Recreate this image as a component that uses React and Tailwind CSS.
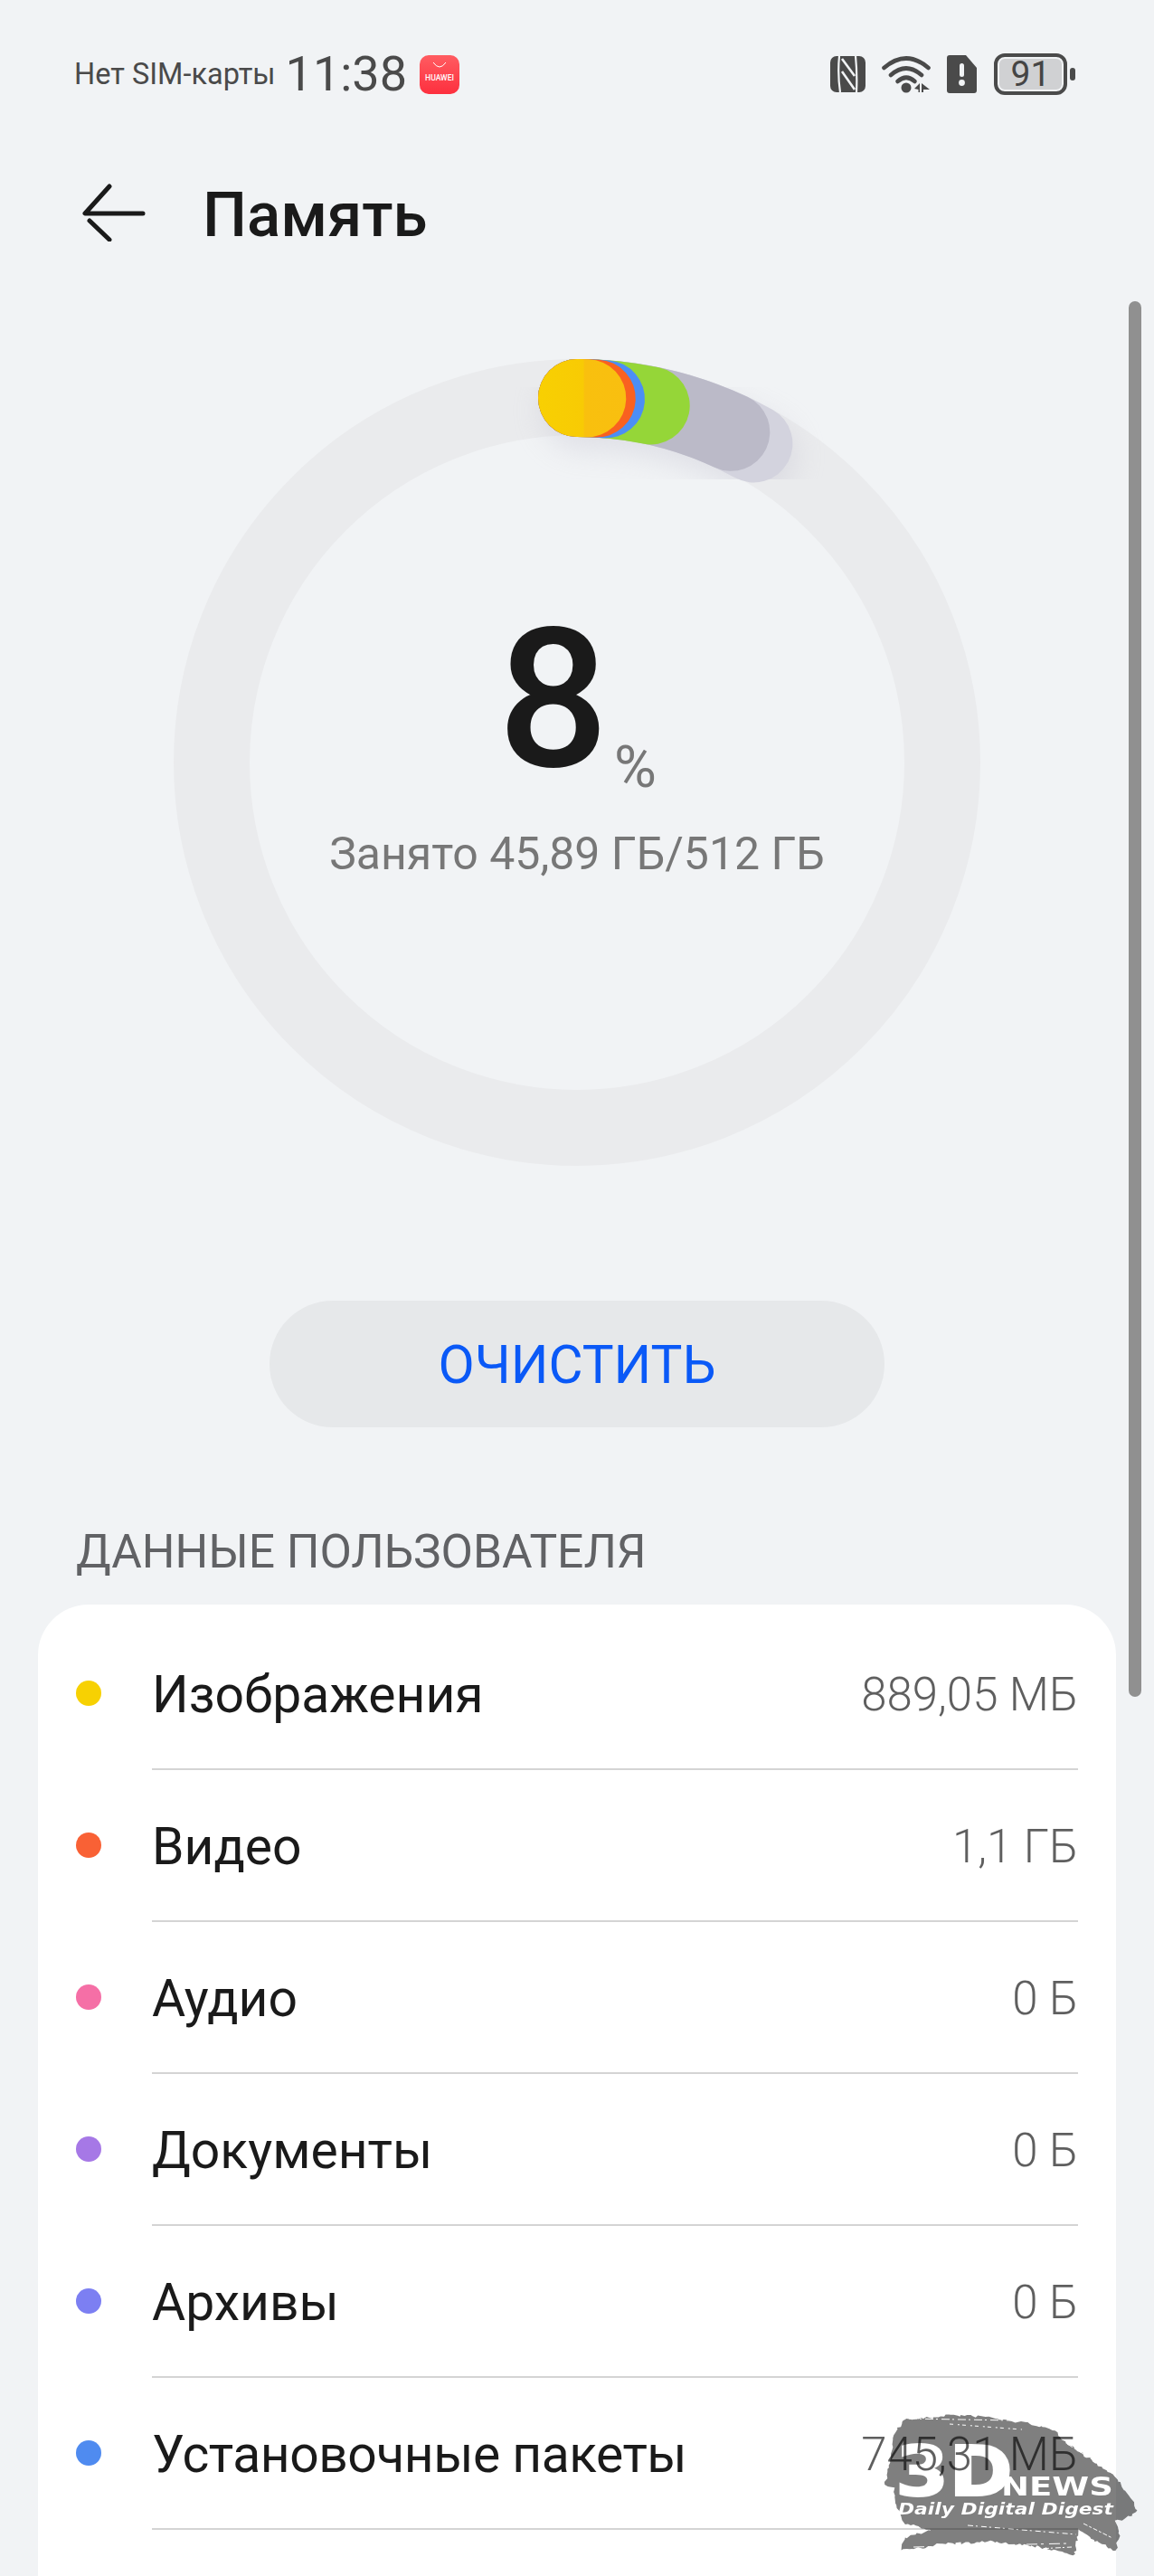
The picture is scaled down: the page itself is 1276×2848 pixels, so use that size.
import React from "react";

const ROWS = [
  { label: "Изображения", value: "889,05 МБ", dot: "bg-[#f7d102]" },
  { label: "Видео", value: "1,1 ГБ", dot: "bg-[#f96135]" },
  { label: "Аудио", value: "0 Б", dot: "bg-[#f56fa6]" },
  { label: "Документы", value: "0 Б", dot: "bg-[#a678e6]" },
  { label: "Архивы", value: "0 Б", dot: "bg-[#7c7ff2]" },
  { label: "Установочные пакеты", value: "745,31 МБ", dot: "bg-[#4f8bf0]", labelClass: "tracking-[-0.5px]" },
];

const BRUSH = [
  [120, 55], [150, 53], [166, 50], [210, 52], [232, 56], [262, 60], [286, 68], [300, 80],
  [332, 104], [353, 118], [362, 132], [370, 142], [378, 156], [366, 163], [354, 168], [358, 178],
  [354, 201], [336, 192], [312, 176], [308, 205], [270, 196], [214, 190], [160, 193], [117, 200],
  [120, 186], [150, 177], [120, 170], [110, 147], [108, 130], [98, 128], [106, 97], [107, 72], [115, 62],
];

// rough torn edge for the brush stroke
const brushPath = () => {
  const pts = [];
  let seed = 7;
  const rnd = () => {
    seed = (seed * 16807) % 2147483647;
    return seed / 2147483647 - 0.5;
  };
  BRUSH.forEach(([x, y], i) => {
    const [nx, ny] = BRUSH[(i + 1) % BRUSH.length];
    const steps = Math.max(1, Math.round(Math.hypot(nx - x, ny - y) / 3));
    for (let s = 0; s < steps; s++) {
      const t = s / steps;
      pts.push(`${(x + (nx - x) * t + rnd() * 3).toFixed(1)} ${(y + (ny - y) * t + rnd() * 3).toFixed(1)}`);
    }
  });
  return `M${pts.join(" L")} Z`;
};

const polar = (deg) => {
  const a = (deg * Math.PI) / 180;
  return [446 + 403 * Math.sin(a), 446 - 403 * Math.cos(a)];
};

const arc = (deg) => {
  const [x, y] = polar(deg);
  return `M446 43 A403 403 0 0 1 ${x.toFixed(1)} ${y.toFixed(1)}`;
};

const StatusIcons = () => (
  <div className="flex items-center">
    {/* NFC */}
    <svg width="39" height="40" viewBox="0 0 39 40" className="mr-[18px]">
      <rect width="39" height="40" rx="7" fill="#4a4a4a" />
      <path d="M10 0 Q8 20 11 40 M28 0 Q30 20 29 40" stroke="#f1f3f5" strokeWidth="2.2" fill="none" />
      <path d="M13 3 L27 22 M13 17 L27 37" stroke="#f1f3f5" strokeWidth="2.6" fill="none" />
    </svg>
    {/* Wifi */}
    <svg width="54" height="42" viewBox="0 0 54 42" className="mr-[18px]" fill="none" stroke="#4a4a4a" strokeWidth="4.6" strokeLinecap="round">
      <path d="M2.5 14 Q27 -7 51.5 14" />
      <path d="M10 22 Q27 7 44 22" />
      <path d="M17.5 29 Q27 20.5 36.5 29" />
      <circle cx="27" cy="36" r="5.5" fill="#4a4a4a" stroke="none" />
      <path d="M36 37 L42 31 V41 H40.5 V38 Z M44 31 L53 38 H46 V41 H44 Z" fill="#4a4a4a" stroke="none" />
    </svg>
    {/* SIM */}
    <svg width="33" height="42" viewBox="0 0 33 42" className="mr-[19px]">
      <path d="M3 0 H21 L33 14 V39 Q33 42 30 42 H3 Q0 42 0 39 V3 Q0 0 3 0 Z" fill="#4a4a4a" />
      <rect x="14" y="9" width="5" height="15" rx="2.5" fill="#f1f3f5" />
      <circle cx="16.5" cy="30.5" r="3.4" fill="#f1f3f5" />
    </svg>
    {/* Battery */}
    <div className="flex h-[46px] w-[81px] items-center justify-center rounded-[12px] border-[4px] border-[#4a4a4a] bg-[#d0d1d3] text-[39px] leading-none text-[#454545] shadow-[inset_0_0_0_2px_#f1f3f5]">
      91
    </div>
    <div className="ml-[3px] h-[14px] w-[6px] rounded-full bg-[#4a4a4a]" />
  </div>
);

const HuaweiBadge = () => (
  <svg width="44" height="43" viewBox="0 0 44 43">
    <defs>
      <linearGradient id="hw" x1="0" y1="0" x2="0" y2="1">
        <stop offset="0" stopColor="#ff5c61" />
        <stop offset="1" stopColor="#fd2f3e" />
      </linearGradient>
    </defs>
    <rect width="44" height="43" rx="10" fill="url(#hw)" />
    <path d="M15 8 Q22 18 29 8" stroke="#fff" strokeWidth="1" fill="none" />
    <text x="22" y="28" textAnchor="middle" fontSize="8.6" fontFamily="Roboto, sans-serif" fontWeight="500" fill="#fff">
      HUAWEI
    </text>
  </svg>
);

const UsageRing = () => (
  <div className="relative mx-auto mt-[91px] h-[892px] w-[892px]">
    <svg width="892" height="892" viewBox="0 0 892 892" className="overflow-visible" fill="none" strokeLinecap="round" strokeWidth="86">
      <defs>
        <linearGradient id="yl" gradientUnits="userSpaceOnUse" x1="400" y1="0" x2="505" y2="0">
          <stop offset="0" stopColor="#f8d002" />
          <stop offset="0.5" stopColor="#f8cb04" />
          <stop offset="0.52" stopColor="#f9c00e" />
          <stop offset="1" stopColor="#f9bf10" />
        </linearGradient>
        <filter id="soft" x="-50%" y="-50%" width="200%" height="200%">
          <feGaussianBlur stdDeviation="16" />
        </filter>
      </defs>
      <circle cx="446" cy="446" r="404" stroke="#eaebed" strokeWidth="84" />
      {/* soft shadows under the segments */}
      <path d={arc(29)} stroke="#bdbccb" opacity="0.35" filter="url(#soft)" transform="translate(4 14)" />
      <path d={arc(1.6)} stroke="#f8d002" opacity="0.3" filter="url(#soft)" transform="translate(0 14)" />
      <path d={arc(29)} stroke="#d3d3de" />
      <path d={arc(25)} stroke="#bbbac8" />
      <path d={arc(11.7)} stroke="#95d638" />
      <path d={arc(4.55)} stroke="#4b8ef5" />
      <path d={arc(3.1)} stroke="#f96120" />
      <path d={arc(1.6)} stroke="url(#yl)" />
    </svg>
    {/* Centre value */}
    <div className="absolute inset-0 flex flex-col items-center">
      <div className="mt-[282px] flex h-[190px] items-end">
        <span className="text-[216px] leading-[190px] font-medium text-[#1a1a1a]">8</span>
        <span className="mb-[-12px] ml-[6px] text-[64px] leading-none text-[#777]">%</span>
      </div>
      <p className="mt-[45px] text-[50px] leading-[60px] text-[#777]">Занято 45,89 ГБ/512 ГБ</p>
    </div>
  </div>
);

const Watermark = () => (
  <svg width="396" height="228" viewBox="0 0 396 228" className="pointer-events-none absolute left-[880px] top-[2620px]">
    <defs>
      <mask id="logo" maskUnits="userSpaceOnUse" x="0" y="0" width="396" height="228">
        <rect width="396" height="228" fill="#fff" />
        <g fontFamily="'DejaVu Sans', sans-serif" fontWeight="700" fill="#000">
          <text x="110" y="139" fontSize="76" textLength="130" lengthAdjust="spacingAndGlyphs" stroke="#000" strokeWidth="2">3D</text>
          <text x="227" y="139" fontSize="29" textLength="124" lengthAdjust="spacingAndGlyphs">NEWS</text>
          <text x="113" y="160" fontSize="18" fontStyle="italic" textLength="238" lengthAdjust="spacingAndGlyphs">Daily Digital Digest</text>
        </g>
        <g stroke="#000" fill="none" strokeWidth="1">
          <path d="M125 54 L240 56" strokeDasharray="9 3 2 4" />
          <path d="M170 60 L250 66" strokeDasharray="4 5 2 3" />
          <path d="M300 82 L355 116" strokeDasharray="7 2 3 3" />
          <path d="M312 84 L366 128" strokeDasharray="3 4 8 2" />
          <path d="M318 170 L350 186" strokeDasharray="5 2 3 2" />
          <path d="M190 172 L310 182" strokeDasharray="6 3 2 4" />
          <path d="M130 196 L300 192" strokeDasharray="12 4 3 6" />
          <path d="M230 200 L305 196" strokeDasharray="2 3 6 2" />
        </g>
      </mask>
    </defs>
    <path mask="url(#logo)" fill="#000" fillOpacity="0.5" d={brushPath()} />
  </svg>
);

export default function App() {
  return (
    <div className="relative flex h-[2848px] w-[1276px] flex-col overflow-hidden bg-[#f1f3f5] font-[Roboto,sans-serif]">
      {/* Status bar */}
      <div className="flex h-[164px] shrink-0 items-center justify-between pl-[82px] pr-[87px]">
        <div className="flex items-center">
          <span className="text-[32.5px] leading-none text-[#4a4a4a]">Нет SIM-карты</span>
          <span className="ml-[11px] text-[54px] leading-none text-[#4a4a4a]">11:38</span>
          <span className="ml-[14px] flex">
            <HuaweiBadge />
          </span>
        </div>
        <StatusIcons />
      </div>

      {/* Title */}
      <div className="flex h-[142px] shrink-0 items-center pl-[90px]">
        <svg width="72" height="64" viewBox="0 0 72 64" fill="none" stroke="#1a1a1a" strokeWidth="5" strokeLinecap="round" strokeLinejoin="round">
          <path d="M31 3 L4 33 H68" />
          <path d="M9 41 L31 62" />
        </svg>
        <h1 className="ml-[62px] pt-[5px] text-[69px] leading-none font-medium text-[#1a1a1a]">Память</h1>
      </div>

      <UsageRing />

      <button className="mx-auto mt-[149px] flex h-[140px] w-[680px] shrink-0 items-center justify-center rounded-full bg-[#e6e8ea] pt-[2px] text-[58.5px] leading-none text-[#0a59f7]">
        ОЧИСТИТЬ
      </button>

      <p className="ml-[84px] mt-[107px] h-[56px] shrink-0 pt-[3px] text-[51.5px] leading-[56px] text-[#616265]">
        ДАННЫЕ ПОЛЬЗОВАТЕЛЯ
      </p>

      {/* Storage list */}
      <div className="mx-[42px] mt-[33px] flex-1 rounded-t-[56px] bg-white pl-[126px] pr-[42px] pt-[15px]">
        {ROWS.map((row) => (
          <div key={row.label} className="relative flex h-[168px] items-center justify-between border-b-2 border-[#d4d4d4] pt-[3px]">
            <span className={`absolute left-[-84px] top-[69px] h-[28px] w-[28px] rounded-full ${row.dot}`} />
            <span className={`text-[57px] leading-none text-[#1a1a1a] ${row.labelClass || ""}`}>{row.label}</span>
            <span className="text-[51px] leading-none font-light text-[#5f5f5f]">{row.value}</span>
          </div>
        ))}
      </div>

      {/* Scrollbar */}
      <div className="absolute right-[14px] top-[333px] h-[1543px] w-[14px] rounded-full bg-[#909090]" />

      <Watermark />
    </div>
  );
}
